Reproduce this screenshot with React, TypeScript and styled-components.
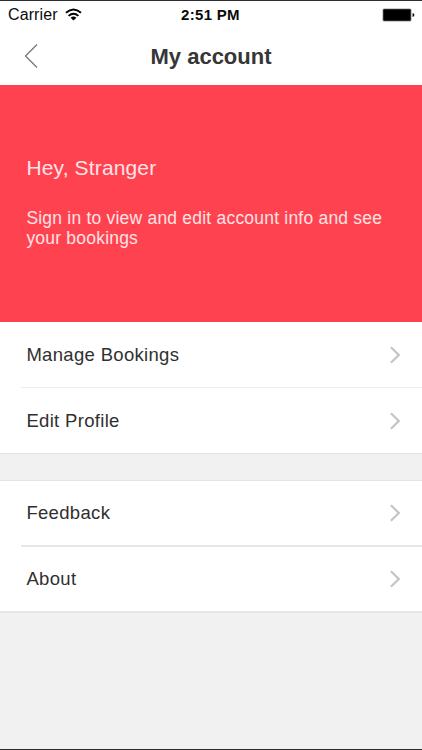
import React from "react";
import styled, { createGlobalStyle } from "styled-components";

const GlobalStyle = createGlobalStyle`
  * { box-sizing: border-box; }
  body {
    margin: 0;
    background: #f1f1f1;
    font-family: "Liberation Sans", Arial, sans-serif;
  }
`;

const Screen = styled.main`
  width: 422px;
  height: 750px;
  overflow: hidden;
  background: #f1f1f1;
  border-top: 1px solid #2e2b2f;
  border-bottom: 1px solid #2e2b2f;
`;

const StatusBar = styled.div`
  display: grid;
  grid-template-columns: 1fr auto 1fr;
  align-items: center;
  height: 28px;
  padding: 0 7px 0 8px;
  background: #fff;
  color: #0a0a0a;
`;

const Carrier = styled.div`
  display: flex;
  align-items: center;
  gap: 7px;
  font-size: 16px;
  line-height: 28px;
  letter-spacing: 0.1px;

  svg {
    margin-bottom: 2px;
  }
`;

const Clock = styled.time`
  margin-right: 2px;
  font-size: 15px;
  font-weight: 700;
  line-height: 28px;
  letter-spacing: 0.3px;
`;

const Battery = styled.svg`
  justify-self: end;
`;

const NavBar = styled.header`
  display: grid;
  grid-template-columns: 60px 1fr 60px;
  align-items: center;
  height: 56px;
  background: #fff;
`;

const BackButton = styled.button`
  display: flex;
  padding: 0 0 2px 24px;
  border: 0;
  background: none;
`;

const Title = styled.h1`
  margin: 0;
  text-align: center;
  font-size: 22px;
  line-height: 56px;
  font-weight: 700;
  color: #363636;
`;

const Hero = styled.section`
  height: 237px;
  padding: 70px 26px 0 26.4px;
  background: #ff424f;
  color: #ffe3e5;
`;

const Greeting = styled.h2`
  margin: 0 0 27px;
  font-size: 21px;
  line-height: 26px;
  font-weight: 400;
  letter-spacing: 0.15px;
`;

const Hint = styled.p`
  margin: 0;
  font-size: 17.5px;
  line-height: 20px;
  letter-spacing: 0.21px;
`;

const Group = styled.nav<{ $spaced?: boolean }>`
  margin-top: ${(p) => (p.$spaced ? 26 : 0)}px;
  border-top: ${(p) => (p.$spaced ? "1px solid #e3e3e3" : "0")};
  border-bottom: ${(p) => (p.$spaced ? "2px solid #e6e6e6" : "1px solid #e3e3e3")};
  background: #fff;
`;

const Row = styled.a<{ $height: number }>`
  display: flex;
  align-items: center;
  justify-content: space-between;
  height: ${(p) => p.$height}px;
  padding: 0 21px 0 26.4px;
  color: #303030;
  font-size: 18.5px;
  letter-spacing: 0.32px;
`;

const Divider = styled.div<{ $color: string; $size: number }>`
  height: ${(p) => p.$size}px;
  margin-left: 21px;
  background: ${(p) => p.$color};
`;

const Chevron = () => (
  <svg width="12" height="18" viewBox="0 0 12 18" fill="none" stroke="#c5c5ca" strokeWidth="2.3">
    <path d="M1.9 1.2 9.8 9 1.9 16.8" />
  </svg>
);

const groups = [
  { items: ["Manage Bookings", "Edit Profile"], line: "#eeeeee", size: 1, height: 65 },
  { items: ["Feedback", "About"], line: "#e6e6e6", size: 2, height: 64 },
];

export default function App() {
  return (
    <Screen>
      <GlobalStyle />
      <StatusBar>
        <Carrier>
          Carrier
          <svg width="17" height="13" viewBox="0 0 17 13" fill="none" stroke="#000" strokeWidth="1.9">
            <path d="M1 4.7Q8.5-1.9 16 4.7M3.6 7.9Q8.5 3.5 13.4 7.9" />
            <path d="M5.6 9.8Q8.5 7.4 11.4 9.8L8.5 12.6Z" fill="#000" stroke="none" />
          </svg>
        </Carrier>
        <Clock>2:51 PM</Clock>
        <Battery width="33" height="14" viewBox="0 0 33 14">
          <rect x="0.5" y="0.5" width="29" height="13" rx="1.5" fill="#999" />
          <rect x="1.3" y="1.3" width="27.4" height="11.4" rx="1" fill="#000" />
          <path d="M30.6 5Q32.4 5.4 32.4 7T30.6 9Z" fill="#000" />
        </Battery>
      </StatusBar>
      <NavBar>
        <BackButton aria-label="Back">
          <svg width="14" height="26" viewBox="0 0 14 26" fill="none" stroke="#777" strokeWidth="1.3">
            <path d="M13 1.5 1.5 13 13 24.5" />
          </svg>
        </BackButton>
        <Title>My account</Title>
      </NavBar>
      <Hero>
        <Greeting>Hey, Stranger</Greeting>
        <Hint>
          Sign in to view and edit account info and see
          <br />
          your bookings
        </Hint>
      </Hero>
      {groups.map((group, g) => (
        <Group key={g} $spaced={g > 0}>
          {group.items.map((label, i) => (
            <React.Fragment key={label}>
              {i > 0 && <Divider $color={group.line} $size={group.size} />}
              <Row $height={group.height}>
                {label}
                <Chevron />
              </Row>
            </React.Fragment>
          ))}
        </Group>
      ))}
    </Screen>
  );
}
